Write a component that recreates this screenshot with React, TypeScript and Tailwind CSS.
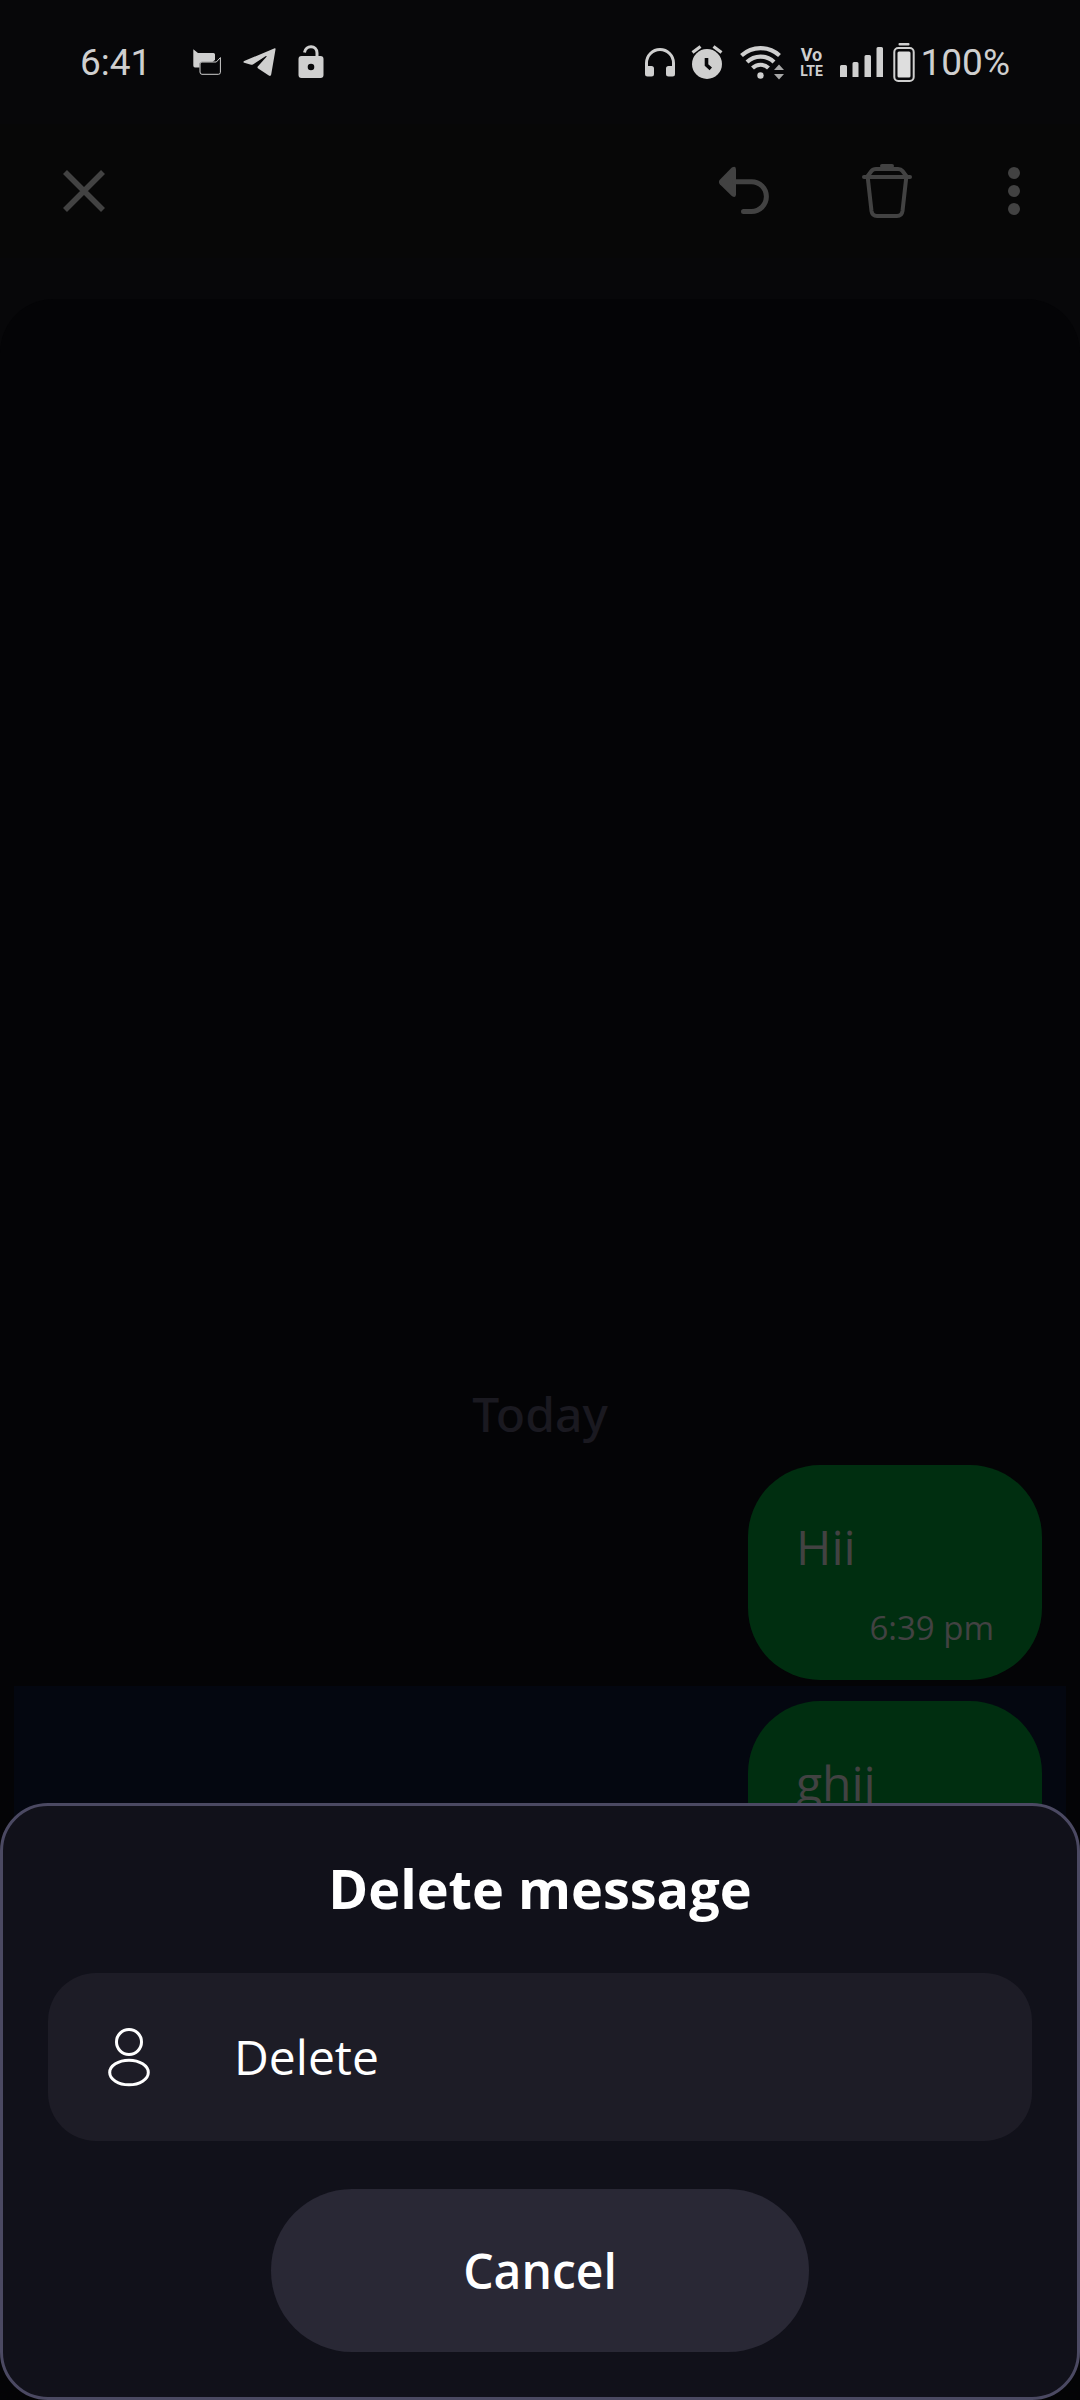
import React from "react";

function NotificationIcons() {
  return (
    <div className="flex items-center gap-[22px] text-[#cfcfcf]">
      <svg aria-label="Messages" width="28" height="26" viewBox="193 50 28 26">
        <path d="M193.3 50.3 L198 54 H213.5 Q215 54 215 55.5 V61 L212.5 62.7 H202 Q199.5 62.7 199.5 65 V68.5 H195 Q193.3 68.5 193.3 66.5 Z" fill="currentColor" />
        <path d="M220.4 58.6 L216.3 63 H202 Q200 63 200 65 V73 Q200 75.3 202 75.3 H218.4 Q220.4 75.3 220.4 73.3 Z" fill="none" stroke="currentColor" strokeWidth="1" />
      </svg>
      <svg aria-label="Telegram" width="33" height="29" viewBox="242.500 50 33 29">
        <path d="M274.2 50.2 Q275.3 50 275 51.4 L270.7 76.5 Q270.2 78.7 268.3 77.5 L257.7 70.6 Q256.300 69.600 257.500 68.300 L266 58.800 Q266.500 57.600 265 58.300 L252.800 66.200 Q251.300 67 249.700 66.600 L243.700 64.700 Q242.100 64 243.700 63.100 Z" fill="currentColor" />
      </svg>
      <svg aria-label="Unlocked" width="26" height="34" viewBox="298 46 26 34">
        <path d="M304.500 53.500 C305.500 45.500 317 45.800 317 54 V58" fill="none" stroke="currentColor" strokeWidth="3" />
        <path fillRule="evenodd" d="M301.500 57 H320.500 Q323.500 57 323.500 60 V76 Q323.500 79 320.500 79 H301.500 Q298.500 79 298.500 76 V60 Q298.500 57 301.500 57 Z M311 64.700 A3.300 3.300 0 1 0 311 71.300 A3.300 3.300 0 1 0 311 64.700 Z" fill="currentColor" />
      </svg>
    </div>
  );
}

function SystemIcons() {
  return (
    <div className="flex items-center gap-4 text-[#cfcfcf]">
      <svg aria-label="Headphones" width="30" height="30" viewBox="644 46 30 30">
        <path d="M645.500 67 V62 A13.500 13.500 0 0 1 672.500 62 V67" fill="none" stroke="currentColor" strokeWidth="3" />
        <path d="M644 65 H650.500 Q653 65 653 67.500 V73 Q653 75.500 650.500 75.500 H646.500 Q644 75.500 644 73 Z M674 65 H667.500 Q665 65 665 67.500 V73 Q665 75.500 667.500 75.500 H671.500 Q674 75.500 674 73 Z" fill="currentColor" />
      </svg>
      <svg aria-label="Alarm" width="32" height="34" viewBox="691 45 32 34">
        <circle cx="707" cy="64" r="15" fill="currentColor" />
        <path d="M692.500 52.500 L700.500 46.500 M721.500 52.500 L713.500 46.500" stroke="currentColor" strokeWidth="3.200" />
        <path d="M706.500 58 V65 L710.800 68.800" fill="none" stroke="#070709" strokeWidth="3.600" />
      </svg>
      <svg aria-label="Wi-Fi" width="45" height="35" viewBox="738 44 45 35">
        <g fill="none" stroke="currentColor" strokeWidth="4.200">
          <path d="M740.500 54.500 A28 28 0 0 1 778.500 54.500" />
          <path d="M746 61 A19.500 19.500 0 0 1 773 61" />
          <path d="M751.500 67 A11.500 11.500 0 0 1 767.500 67" />
        </g>
        <circle cx="759.500" cy="74.500" r="3.200" fill="currentColor" />
        <path d="M778 63.500 L783 69 H773 Z M778 78.500 L783 73 H773 Z" fill="currentColor" opacity=".8" />
      </svg>
      <div className="flex w-6 flex-col items-center font-['Liberation_Sans_Narrow','Roboto',sans-serif] font-bold">
        <span className="text-[18px] leading-[18px]">Vo</span>
        <span className="text-[14px] leading-[14px]">LTE</span>
      </div>
      <svg aria-label="Signal" width="43" height="30" viewBox="839 47 43 30">
        <path d="M839 66.500 Q839 65 840.500 65 H844.500 Q846 65 846 66.500 V77 H839 Z M851.500 63.500 Q851.500 62 853 62 H856 Q857.500 62 857.500 63.500 V77 H851.500 Z M863.500 56.500 Q863.500 55 865 55 H868.500 Q870 55 870 56.500 V77 H863.500 Z M875.500 48.500 Q875.500 47 877 47 H880.500 Q882 47 882 48.500 V77 H875.500 Z" fill="currentColor" />
      </svg>
      <div className="-ml-1.5 flex items-center gap-1.5">
        <svg aria-label="Battery" width="22" height="39" viewBox="892.500 42 22 39">
          <rect x="898" y="42" width="11" height="2.500" rx="1" fill="currentColor" />
          <rect x="893.800" y="47" width="19.400" height="33" rx="4" fill="none" stroke="currentColor" strokeWidth="2" />
          <rect x="897" y="50.500" width="13" height="26" rx="1.500" fill="#dedede" />
        </svg>
        <span className="font-['Roboto'] text-[37px] leading-none">100%</span>
      </div>
    </div>
  );
}

function StatusBar() {
  return (
    <div className="flex h-[124px] items-center justify-between pr-[70px] pl-20">
      <div className="flex items-center gap-[42px]">
        <span className="font-['Roboto'] text-[37px] leading-none text-[#cfcfcf]">6:41</span>
        <NotificationIcons />
      </div>
      <SystemIcons />
    </div>
  );
}

function Toolbar() {
  return (
    <header className="flex h-[134px] items-center justify-between bg-[#070707] pr-12 pl-[63px] text-[#424242]">
      <button aria-label="Close">
        <svg width="42" height="42" viewBox="0 0 42 42">
          <path d="M2 2 L40 40 M40 2 L2 40" stroke="currentColor" strokeWidth="5.600" />
        </svg>
      </button>
      <div className="flex items-center">
        <button aria-label="Undo">
          <svg width="50" height="54" viewBox="719 164 50 54">
            <path d="M719.800 179.800 L731.800 167.600 Q736 165 736 169.500 V194.500 Q736 198.500 731.800 196 L719.800 184.200 Q718 182 719.800 179.800 Z" fill="currentColor" />
            <path d="M735 181.700 H751.500 A14.800 14.800 0 0 1 751.500 211.500 H743.500" fill="none" stroke="currentColor" strokeWidth="5" strokeLinecap="round" />
          </svg>
        </button>
        <button aria-label="Delete selected" className="ml-[93px]">
          <svg width="50" height="54" viewBox="862 164 50 54" fill="none" stroke="currentColor" strokeWidth="4" strokeLinecap="round" strokeLinejoin="round">
            <path d="M864 177 H910" />
            <path d="M867 177 L871.500 171 Q873 169 876 169 H898 Q901 169 902.500 171 L907 177" />
            <path d="M882 166 H892" />
            <path d="M867.800 178 L871.500 211 Q872.200 216 877 216 H897 Q901.800 216 902.500 211 L906.200 178" />
          </svg>
        </button>
        <button aria-label="More options" className="ml-[84px] px-3">
          <svg width="12" height="48" viewBox="0 0 12 48" fill="currentColor">
            <circle cx="6" cy="6" r="6" />
            <circle cx="6" cy="24" r="6" />
            <circle cx="6" cy="42" r="6" />
          </svg>
        </button>
      </div>
    </header>
  );
}

function Message({ text, time, selected = false }: { text: string; time: string; selected?: boolean }) {
  return (
    <li className={selected ? "flex justify-end bg-[#040710] pt-[15px] pr-6 pb-1.5" : "flex justify-end pt-[15px] pr-6 pb-1.5"}>
      <div className="flex w-[294px] flex-col rounded-[72px] bg-[#002e10] px-12 pt-12 pb-[29px] text-[#424242]">
        <p className="text-[48px] leading-[68px]">{text}</p>
        <time className="mt-6 text-right text-[33px] leading-[46px]">{time}</time>
      </div>
    </li>
  );
}

function DeleteSheet() {
  return (
    <div
      role="dialog"
      aria-labelledby="sheet-title"
      className="fixed inset-x-0 bottom-0 flex flex-col items-center rounded-[48px] border-[3px] border-[#4b4962] bg-[#11111a] px-[45px] pt-[45px] pb-[45px] text-white"
    >
      <h2 id="sheet-title" className="text-[54px] leading-[74px] font-bold">Delete message</h2>
      <button className="mt-12 flex h-[168px] w-full items-center rounded-[48px] bg-[#1d1c26] pl-[60px] text-[48px]">
        <svg width="42" height="60" viewBox="0 0 42 60" fill="none" stroke="currentColor" strokeWidth="3">
          <circle cx="21" cy="15" r="12.500" />
          <ellipse cx="21" cy="45.500" rx="19.300" ry="12.300" />
        </svg>
        <span className="ml-[84px]">Delete</span>
      </button>
      <button className="mt-12 h-[163px] w-full max-w-[538px] rounded-[81px] bg-[#292835] text-[48px] font-semibold">Cancel</button>
    </div>
  );
}

export default function App() {
  return (
    <div className="flex min-h-screen flex-col bg-[#070709] font-['Open_Sans','Noto_Sans',sans-serif]">
      <StatusBar />
      <Toolbar />
      <main className="mt-[41px] flex flex-1 flex-col justify-end rounded-t-[54px] bg-[#040406] px-3.5 pb-[478px]">
        <h1 className="mb-0.5 text-center font-['Noto_Sans'] text-[48px] leading-[68px] font-medium text-[#1a1920]">Today</h1>
        <ul>
          <Message text="Hii" time="6:39 pm" />
          <Message text="ghij" time="6:39 pm" selected />
        </ul>
      </main>
      <DeleteSheet />
    </div>
  );
}
